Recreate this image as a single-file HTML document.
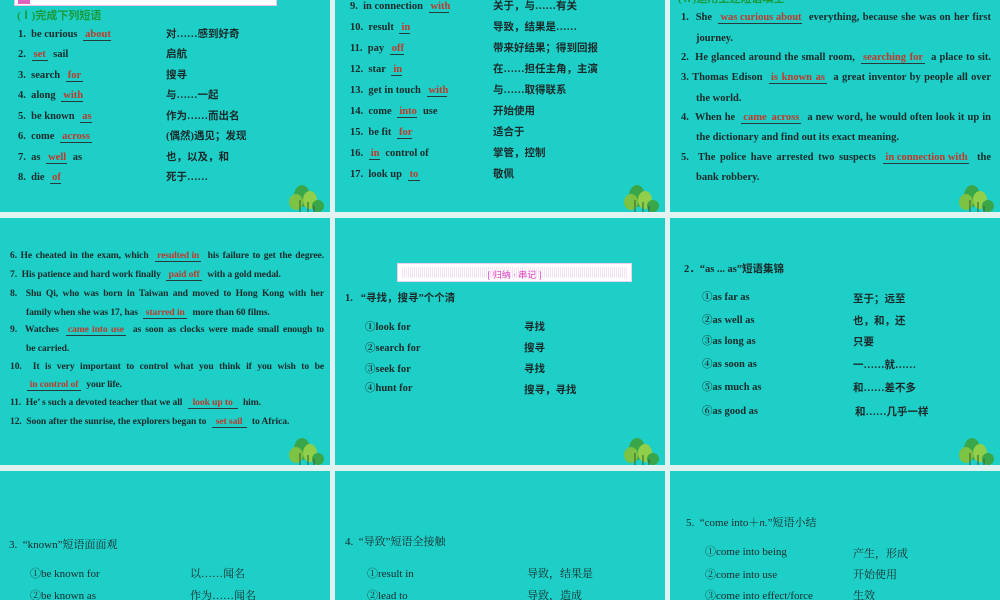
<!DOCTYPE html>
<html><head><meta charset="utf-8"><style>
*{margin:0;padding:0;box-sizing:border-box}
body{width:1000px;height:600px;background:#e0f3f1;position:relative;overflow:hidden;font-family:"Liberation Serif","Noto Serif CJK SC",serif;font-weight:bold;font-size:10.5px;color:#1a2a2a}
.p{position:absolute;background:#1dcfc7;overflow:hidden}
.t{position:absolute;white-space:nowrap;line-height:12px}
.b{display:inline-block;color:#c0392b;border-bottom:1px solid #2a3a3a;text-align:center;line-height:10px;margin:0 3px;padding:0 2px}
.j{text-align:justify;text-align-last:justify}
.c{font-family:"Liberation Serif","Noto Sans CJK SC",serif}
.n{font-weight:normal;font-family:"Liberation Serif","Noto Serif CJK SC",serif;font-size:11px}
.s{font-size:9.6px;letter-spacing:-0.1px}
.tree{position:absolute;right:4px;bottom:0}
</style></head><body>
<svg width="0" height="0" style="position:absolute"><defs><g id="tr"><ellipse cx="14" cy="14" rx="8" ry="11" fill="#3aa64a"/><ellipse cx="8" cy="20" rx="7" ry="8" fill="#7cc243"/><ellipse cx="22" cy="18" rx="7" ry="9" fill="#8fcf4a"/><ellipse cx="30" cy="24" rx="6" ry="6" fill="#3aa64a"/><path d="M12 30V18M20 30V20M26 30V24" stroke="#3a5a2a" stroke-width="1"/></g></defs></svg>

<!-- row1 col1 -->
<div class="p" style="left:0;top:0;width:330px;height:212px">
<div style="position:absolute;left:14px;top:-2px;width:263px;height:8px;background:#fff;border:1px solid #e8c0e8"><div style="width:12px;height:5px;background:#e060c0;margin:0 0 0 3px"></div></div>
<div class="t c" style="left:17px;top:10px;color:#1a9a3a;font-size:11px">(Ⅰ)完成下列短语</div>
<div class="t" style="left:18px;top:29px">1.&nbsp; be curious <span class="b" style="width:28px">about</span></div><div class="t c" style="left:166px;top:29px">对……感到好奇</div>
<div class="t" style="left:18px;top:49px">2.&nbsp;<span class="b" style="width:16px">set</span> sail</div><div class="t c" style="left:166px;top:49px">启航</div>
<div class="t" style="left:18px;top:70px">3.&nbsp; search <span class="b" style="width:17px">for</span></div><div class="t c" style="left:166px;top:70px">搜寻</div>
<div class="t" style="left:18px;top:90px">4.&nbsp; along <span class="b" style="width:22px">with</span></div><div class="t c" style="left:166px;top:90px">与……一起</div>
<div class="t" style="left:18px;top:111px">5.&nbsp; be known <span class="b" style="width:12px">as</span></div><div class="t c" style="left:166px;top:111px">作为……而出名</div>
<div class="t" style="left:18px;top:131px">6.&nbsp; come <span class="b" style="width:32px">across</span></div><div class="t c" style="left:166px;top:131px">(偶然)遇见；发现</div>
<div class="t" style="left:18px;top:152px">7.&nbsp; as <span class="b" style="width:21px">well</span> as</div><div class="t c" style="left:166px;top:152px">也，以及，和</div>
<div class="t" style="left:18px;top:172px">8.&nbsp; die <span class="b" style="width:11px">of</span></div><div class="t c" style="left:166px;top:172px">死于……</div>
<svg class="tree" width="38" height="30"><use href="#tr"/></svg>
</div>

<!-- row1 col2 -->
<div class="p" style="left:335px;top:0;width:330px;height:212px">
<div class="t" style="left:15px;top:1px">9.&nbsp; in connection <span class="b" style="width:20px">with</span></div><div class="t c" style="left:158px;top:1px">关于，与……有关</div>
<div class="t" style="left:15px;top:22px">10.&nbsp; result <span class="b" style="width:11px">in</span></div><div class="t c" style="left:158px;top:22px">导致，结果是……</div>
<div class="t" style="left:15px;top:43px">11.&nbsp; pay <span class="b" style="width:14px">off</span></div><div class="t c" style="left:158px;top:43px">带来好结果；得到回报</div>
<div class="t" style="left:15px;top:64px">12.&nbsp; star <span class="b" style="width:11px">in</span></div><div class="t c" style="left:158px;top:64px">在……担任主角，主演</div>
<div class="t" style="left:15px;top:85px">13.&nbsp; get in touch <span class="b" style="width:20px">with</span></div><div class="t c" style="left:158px;top:85px">与……取得联系</div>
<div class="t" style="left:15px;top:106px">14.&nbsp; come <span class="b" style="width:20px">into</span> use</div><div class="t c" style="left:158px;top:106px">开始使用</div>
<div class="t" style="left:15px;top:127px">15.&nbsp; be fit <span class="b" style="width:15px">for</span></div><div class="t c" style="left:158px;top:127px">适合于</div>
<div class="t" style="left:15px;top:148px">16.&nbsp;<span class="b" style="width:11px">in</span> control of</div><div class="t c" style="left:158px;top:148px">掌管，控制</div>
<div class="t" style="left:15px;top:169px">17.&nbsp; look up <span class="b" style="width:12px">to</span></div><div class="t c" style="left:158px;top:169px">敬佩</div>
<svg class="tree" width="38" height="30"><use href="#tr"/></svg>
</div>

<!-- row1 col3 -->
<div class="p" style="left:670px;top:0;width:330px;height:212px">
<div class="t c" style="left:8px;top:-7px;color:#1a9a3a;font-size:11px">(Ⅱ)运用上述短语填空</div>
<div class="t j" style="left:11px;top:12px;width:310px">1.&nbsp; She <span class="b" style="width:84px">was curious about</span> everything, because she was on her first</div>
<div class="t" style="left:26px;top:33px">journey.</div>
<div class="t j" style="left:11px;top:52px;width:310px">2.&nbsp; He glanced around the small room, <span class="b" style="width:64px">searching for</span> a place to sit.</div>
<div class="t j" style="left:11px;top:72px;width:310px">3. Thomas Edison <span class="b" style="width:58px">is known as</span> a great inventor by people all over</div>
<div class="t" style="left:26px;top:93px">the world.</div>
<div class="t j" style="left:11px;top:112px;width:310px">4.&nbsp; When he <span class="b" style="width:60px">came across</span> a new word, he would often look it up in</div>
<div class="t" style="left:26px;top:132px">the dictionary and find out its exact meaning.</div>
<div class="t j" style="left:11px;top:152px;width:310px">5.&nbsp; The police have arrested two suspects <span class="b" style="width:86px">in connection with</span> the</div>
<div class="t" style="left:26px;top:172px">bank robbery.</div>
<svg class="tree" width="38" height="30"><use href="#tr"/></svg>
</div>

<!-- row2 col1 -->
<div class="p s" style="left:0;top:218px;width:330px;height:247px">
<div class="t j" style="left:10px;top:32px;width:314px">6. He cheated in the exam, which <span class="b" style="width:46px">resulted in</span> his failure to get the degree.</div>
<div class="t" style="left:10px;top:51px">7.&nbsp; His patience and hard work finally <span class="b" style="width:36px">paid off</span> with a gold medal.</div>
<div class="t j" style="left:10px;top:70px;width:314px">8.&nbsp; Shu Qi, who was born in Taiwan and moved to Hong Kong with her</div>
<div class="t" style="left:26px;top:89px">family when she was 17, has <span class="b" style="width:44px">starred in</span> more than 60 films.</div>
<div class="t j" style="left:10px;top:106px;width:314px">9.&nbsp; Watches <span class="b" style="width:60px">came into use</span> as soon as clocks were made small enough to</div>
<div class="t" style="left:26px;top:125px">be carried.</div>
<div class="t j" style="left:10px;top:143px;width:314px">10.&nbsp; It is very important to control what you think if you wish to be</div>
<div class="t" style="left:27px;top:161px"><span class="b" style="width:54px;margin:0 3px 0 0">in control of</span> your life.</div>
<div class="t" style="left:10px;top:179px">11.&nbsp; He’ s such a devoted teacher that we all <span class="b" style="width:50px">look up to</span> him.</div>
<div class="t" style="left:10px;top:198px">12.&nbsp; Soon after the sunrise, the explorers began to <span class="b" style="width:35px">set sail</span> to Africa.</div>
<svg class="tree" width="38" height="30"><use href="#tr"/></svg>
</div>

<!-- row2 col2 -->
<div class="p" style="left:335px;top:218px;width:330px;height:247px">
<div style="position:absolute;left:62px;top:45px;width:235px;height:19px;background:#fff;border:1px solid #f0d0f0"><div style="position:absolute;inset:3px 4px;background:repeating-linear-gradient(90deg,#f6e2f6 0 1px,#fff 1px 2px)"></div><div style="position:absolute;width:100%;top:4px;text-align:center;color:#e040c0;font-size:9px;font-weight:normal" class="c">[ 归纳 · 串记 ]</div></div>
<div class="t c" style="left:10px;top:75px">1.&nbsp;&nbsp; “寻找，搜寻”个个清</div>
<div class="t" style="left:30px;top:104px">①look for</div><div class="t c" style="left:189px;top:104px">寻找</div>
<div class="t" style="left:30px;top:125px">②search for</div><div class="t c" style="left:189px;top:125px">搜寻</div>
<div class="t" style="left:30px;top:146px">③seek for</div><div class="t c" style="left:189px;top:146px">寻找</div>
<div class="t" style="left:30px;top:165px">④hunt for</div><div class="t c" style="left:189px;top:167px">搜寻，寻找</div>
<svg class="tree" width="38" height="30"><use href="#tr"/></svg>
</div>

<!-- row2 col3 -->
<div class="p" style="left:670px;top:218px;width:330px;height:247px">
<div class="t c" style="left:14px;top:46px">2．“as ... as”短语集锦</div>
<div class="t" style="left:32px;top:74px">①as far as</div><div class="t c" style="left:183px;top:76px">至于；远至</div>
<div class="t" style="left:32px;top:97px">②as well as</div><div class="t c" style="left:183px;top:98px">也，和，还</div>
<div class="t" style="left:32px;top:118px">③as long as</div><div class="t c" style="left:183px;top:119px">只要</div>
<div class="t" style="left:32px;top:141px">④as soon as</div><div class="t c" style="left:183px;top:142px">一……就……</div>
<div class="t" style="left:32px;top:164px">⑤as much as</div><div class="t c" style="left:183px;top:165px">和……差不多</div>
<div class="t" style="left:32px;top:188px">⑥as good as</div><div class="t c" style="left:185px;top:189px">和……几乎一样</div>
<svg class="tree" width="38" height="30"><use href="#tr"/></svg>
</div>

<!-- row3 -->
<div class="p n" style="left:0;top:471px;width:330px;height:129px">
<div class="t" style="left:9px;top:68px">3.&nbsp; “known”短语面面观</div>
<div class="t" style="left:30px;top:97px">①be known for</div><div class="t" style="left:190px;top:97px">以……闻名</div>
<div class="t" style="left:30px;top:119px">②be known as</div><div class="t" style="left:190px;top:119px">作为……闻名</div>
</div>
<div class="p n" style="left:335px;top:471px;width:330px;height:129px">
<div class="t" style="left:10px;top:65px">4.&nbsp; “导致”短语全接触</div>
<div class="t" style="left:32px;top:97px">①result in</div><div class="t" style="left:192px;top:97px">导致，结果是</div>
<div class="t" style="left:32px;top:119px">②lead to</div><div class="t" style="left:192px;top:119px">导致，造成</div>
</div>
<div class="p n" style="left:670px;top:471px;width:330px;height:129px">
<div class="t" style="left:16px;top:46px">5.&nbsp; “come into＋<i>n.</i>”短语小结</div>
<div class="t" style="left:35px;top:75px">①come into being</div><div class="t" style="left:183px;top:77px">产生，形成</div>
<div class="t" style="left:35px;top:98px">②come into use</div><div class="t" style="left:183px;top:98px">开始使用</div>
<div class="t" style="left:35px;top:119px">③come into effect/force</div><div class="t" style="left:183px;top:119px">生效</div>
</div>
</body></html>
